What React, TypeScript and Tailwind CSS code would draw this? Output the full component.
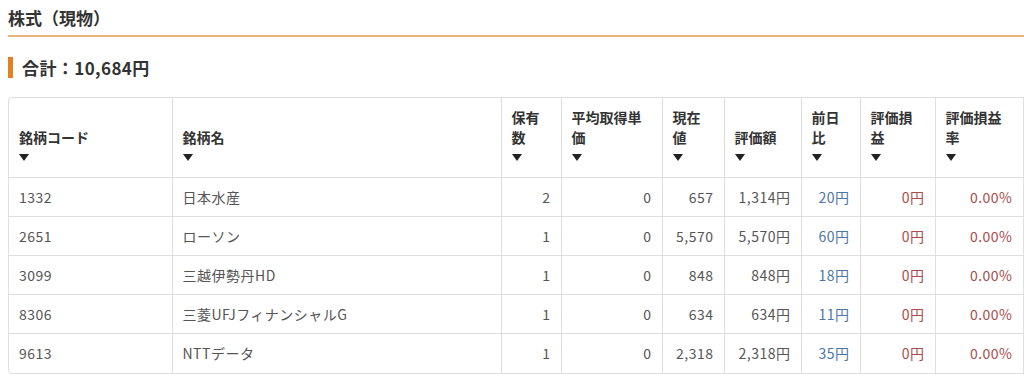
import React from "react";

const Arrow = () => (
  <svg width="10" height="7" viewBox="0 0 10 7" className="inline-block align-middle">
    <polygon points="0,0 10,0 5,7" fill="#222" />
  </svg>
);

type Row = {
  code: string;
  name: string;
  qty: string;
  avg: string;
  price: string;
  value: string;
  diff: string;
  pl: string;
  rate: string;
};

const rows: Row[] = [
  { code: "1332", name: "日本水産", qty: "2", avg: "0", price: "657", value: "1,314円", diff: "20円", pl: "0円", rate: "0.00%" },
  { code: "2651", name: "ローソン", qty: "1", avg: "0", price: "5,570", value: "5,570円", diff: "60円", pl: "0円", rate: "0.00%" },
  { code: "3099", name: "三越伊勢丹HD", qty: "1", avg: "0", price: "848", value: "848円", diff: "18円", pl: "0円", rate: "0.00%" },
  { code: "8306", name: "三菱UFJフィナンシャルG", qty: "1", avg: "0", price: "634", value: "634円", diff: "11円", pl: "0円", rate: "0.00%" },
  { code: "9613", name: "NTTデータ", qty: "1", avg: "0", price: "2,318", value: "2,318円", diff: "35円", pl: "0円", rate: "0.00%" },
];

const headers: React.ReactNode[] = [
  <>銘柄コード</>,
  <>銘柄名</>,
  <>保有<br />数</>,
  <>平均取得単<br />価</>,
  <>現在<br />値</>,
  <>評価額</>,
  <>前日<br />比</>,
  <>評価損<br />益</>,
  <>評価損益<br />率</>,
  <></>,
];

const widths = ["w-[163px]", "w-[329px]", "w-[60px]", "w-[101px]", "w-[62px]", "w-[77px]", "w-[59px]", "w-[75px]", "w-[88px]", "w-[100px]"];

export default function App() {
  const font = { fontFamily: '"Noto Sans CJK JP", "Noto Sans", sans-serif' };
  return (
    <div className="w-[1024px] h-[378px] overflow-hidden bg-white" style={font}>
      <div className="pl-[8px]">
        <h2 className="pt-[6px] pb-[5px] border-b-2 border-[#eab07c] text-[17px] leading-[24px] font-bold text-[#333]">
          株式（現物）
        </h2>
        <div className="mt-[20px] flex items-center h-[21px]">
          <div className="w-[5px] h-[21px] bg-[#e67e22]" />
          <div className="ml-[9px] text-[17px] leading-[21px] font-bold text-[#333] tracking-[0.4px]">
            合計：10,684円
          </div>
        </div>
        <div className="mt-[19px] w-[1114px] border border-[#dedede] rounded-[4px] overflow-hidden">
          <table className="table-fixed border-collapse w-[1114px]">
            <colgroup>
              {widths.map((w, i) => (
                <col key={i} className={w} />
              ))}
            </colgroup>
            <thead>
              <tr>
                {headers.map((h, i) => (
                  <th
                    key={i}
                    className={`align-bottom text-left font-bold text-[14px] leading-[20px] text-[#333] px-[10px] pt-[9px] pb-[10px] ${i > 0 ? "border-l border-[#dedede]" : ""}`}
                  >
                    {i < 9 ? (
                      <>
                        <div>{h}</div>
                        <div className="h-[20px] flex items-center">
                          <Arrow />
                        </div>
                      </>
                    ) : null}
                  </th>
                ))}
              </tr>
            </thead>
            <tbody>
              {rows.map((r) => (
                <tr key={r.code} className="border-t border-[#dedede] text-[14px] leading-[20px] text-[#555] tracking-[0.5px]">
                  <td className="px-[10px] py-[9px] h-[39px]">{r.code}</td>
                  <td className="px-[10px] py-[9px] border-l border-[#dedede]">{r.name}</td>
                  <td className="px-[10px] py-[9px] border-l border-[#dedede] text-right">{r.qty}</td>
                  <td className="px-[10px] py-[9px] border-l border-[#dedede] text-right">{r.avg}</td>
                  <td className="px-[10px] py-[9px] border-l border-[#dedede] text-right">{r.price}</td>
                  <td className="px-[10px] py-[9px] border-l border-[#dedede] text-right">{r.value}</td>
                  <td className="px-[10px] py-[9px] border-l border-[#dedede] text-right text-[#4c76a6]">{r.diff}</td>
                  <td className="px-[10px] py-[9px] border-l border-[#dedede] text-right text-[#a84c4c]">{r.pl}</td>
                  <td className="px-[10px] py-[9px] border-l border-[#dedede] text-right text-[#a84c4c]">{r.rate}</td>
                  <td className="px-[10px] py-[9px] border-l border-[#dedede]"></td>
                </tr>
              ))}
            </tbody>
          </table>
        </div>
      </div>
    </div>
  );
}
